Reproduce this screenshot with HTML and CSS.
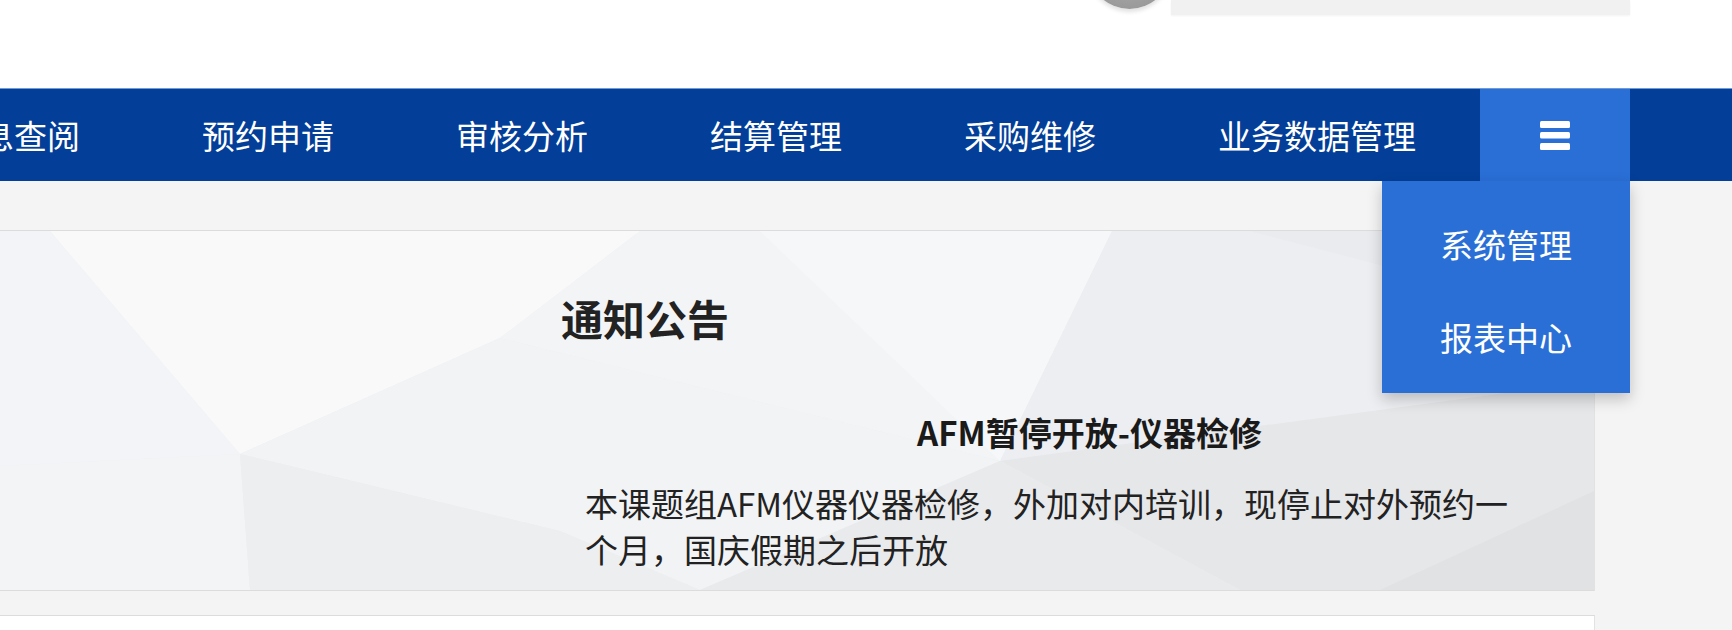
FILE: index.html
```html
<!DOCTYPE html>
<html lang="zh-CN">
<head>
<meta charset="utf-8">
<title>通知公告</title>
<link rel="stylesheet" href="styles.css">
</head>
<body>
<header class="top">
  <div class="avatar"></div>
  <div class="searchbar"></div>
</header>
<nav class="nav">
  <ul class="menu">
    <li class="item">信息查阅</li>
    <li class="item">预约申请</li>
    <li class="item">审核分析</li>
    <li class="item">结算管理</li>
    <li class="item">采购维修</li>
    <li class="item">业务数据管理</li>
    <li class="item toggle">
      <svg class="bars" width="30" height="29" viewBox="0 0 30 29" aria-hidden="true">
        <rect x="0" y="0" width="30" height="7" rx="1.5" fill="#fff"/>
        <rect x="0" y="11" width="30" height="6.5" rx="1.5" fill="#fff"/>
        <rect x="0" y="22" width="30" height="7" rx="1.5" fill="#fff"/>
      </svg>
      <ul class="dropdown">
        <li class="drop-item">系统管理</li>
        <li class="drop-item">报表中心</li>
      </ul>
    </li>
  </ul>
</nav>
<main class="main">
  <section class="card">
    <svg class="poly" viewBox="0 0 1594 359" preserveAspectRatio="none" aria-hidden="true">
      <rect x="0" y="0" width="1594" height="359" fill="#eceef1"/>
      <polygon points="0,0 50,0 240,223 0,235" fill="#f2f4f7"/>
      <polygon points="50,0 640,0 500,107 240,223" fill="#f9f9fa"/>
      <polygon points="640,0 1112,0 1000,230 500,107" fill="#f3f4f6"/>
      <polygon points="760,0 1112,0 1000,230" fill="#f6f7f8"/>
      <polygon points="1112,0 1594,0 1594,150 1000,230" fill="#eceef1"/>
      <polygon points="1250,0 1594,0 1594,90" fill="#e9ebee"/>
      <polygon points="500,107 1000,230 700,359 560,300 240,223" fill="#f1f3f5"/>
      <polygon points="0,235 240,223 250,359 0,359" fill="#f3f4f5"/>
      <polygon points="240,223 560,300 700,359 250,359" fill="#eceef0"/>
      <polygon points="1000,230 1594,150 1594,359 1240,359" fill="#e6e7e9"/>
      <polygon points="1000,230 1240,359 700,359" fill="#e9eaec"/>
      <polygon points="1594,260 1594,359 1380,359" fill="#e1e2e4"/>
    </svg>
    <div class="content">
      <h2 class="title">通知公告</h2>
      <div class="notice">
        <h3 class="notice-title">AFM暂停开放-仪器检修</h3>
        <p class="notice-body">本课题组AFM仪器仪器检修，外加对内培训，现停止对外预约一个月，国庆假期之后开放</p>
      </div>
    </div>
  </section>
  <section class="card2"></section>
</main>
</body>
</html>
```

FILE: styles.css
```css
html, body {
  margin: 0;
  padding: 0;
}
body {
  width: 1732px;
  height: 630px;
  overflow: hidden;
  background: #fff;
  font-family: "Noto Sans CJK SC", "Microsoft YaHei", sans-serif;
}

.top {
  height: 88px;
  display: flex;
  justify-content: flex-end;
  align-items: flex-start;
  padding-right: 102px;
  box-sizing: border-box;
}
.avatar {
  width: 83px;
  height: 83px;
  margin-top: -74px;
  border-radius: 50%;
  background: radial-gradient(circle at 50% 40%, #b5b5b5 0%, #9c9c9c 70%, #8f8f8f 100%);
  box-shadow: 0 3px 4px rgba(0,0,0,0.12);
}
.searchbar {
  width: 459px;
  height: 15px;
  background: #f1f1f1;
  box-shadow: 0 1px 2px rgba(0,0,0,0.05);
}

.nav {
  height: 93px;
  background: #033e98;
  border-top: 1px solid #6f9ad8;
  box-sizing: border-box;
  position: relative;
  z-index: 5;
}
.menu {
  list-style: none;
  margin: 0 0 0 -113px;
  padding: 0;
  display: flex;
  height: 100%;
}
.item {
  padding: 0 61px;
  font-size: 33px;
  line-height: 92px;
  color: #fff;
  white-space: nowrap;
}
.toggle {
  width: 150px;
  padding: 0;
  box-sizing: border-box;
  background: #2a6fd6;
  display: flex;
  align-items: center;
  justify-content: center;
  position: relative;
  margin-left: 3px;
}
.dropdown {
  list-style: none;
  margin: 0;
  padding: 17px 0 9px;
  position: absolute;
  top: 100%;
  right: 0;
  width: 248px;
  background: #2a6fd6;
  box-shadow: 0 6px 14px rgba(0,0,0,0.22);
}
.drop-item {
  height: 93px;
  line-height: 93px;
  text-align: center;
  font-size: 33px;
  color: #fff;
}

.main {
  background: #f4f4f4;
  padding-top: 49px;
  height: 449px;
  box-sizing: border-box;
}
.card {
  width: 1595px;
  display: grid;
  border-top: 1px solid #dcdcdc;
  border-bottom: 1px solid #dcdcdc;
  border-right: 1px solid #e2e2e2;
  box-sizing: border-box;
}
.poly, .content {
  grid-area: 1 / 1;
}
.poly {
  width: 100%;
  height: 100%;
  display: block;
}
.content {
  padding: 57px 0 17px 561px;
}
.title {
  margin: 0;
  font-size: 42px;
  line-height: 59px;
  font-weight: 700;
  color: #222;
}
.notice {
  padding: 0 60px 0 24px;
}
.notice-title {
  margin: 62px -60px 0 0;
  text-align: center;
  font-size: 33px;
  line-height: 46px;
  font-weight: 700;
  color: #1a1a1a;
}
.notice-body {
  margin: 25px 0 0;
  font-size: 33px;
  line-height: 46px;
  color: #222;
}
.card2 {
  width: 1595px;
  height: 40px;
  margin-top: 24px;
  background: #fff;
  border-top: 1px solid #dcdcdc;
  border-right: 1px solid #e2e2e2;
  box-sizing: border-box;
}
```
